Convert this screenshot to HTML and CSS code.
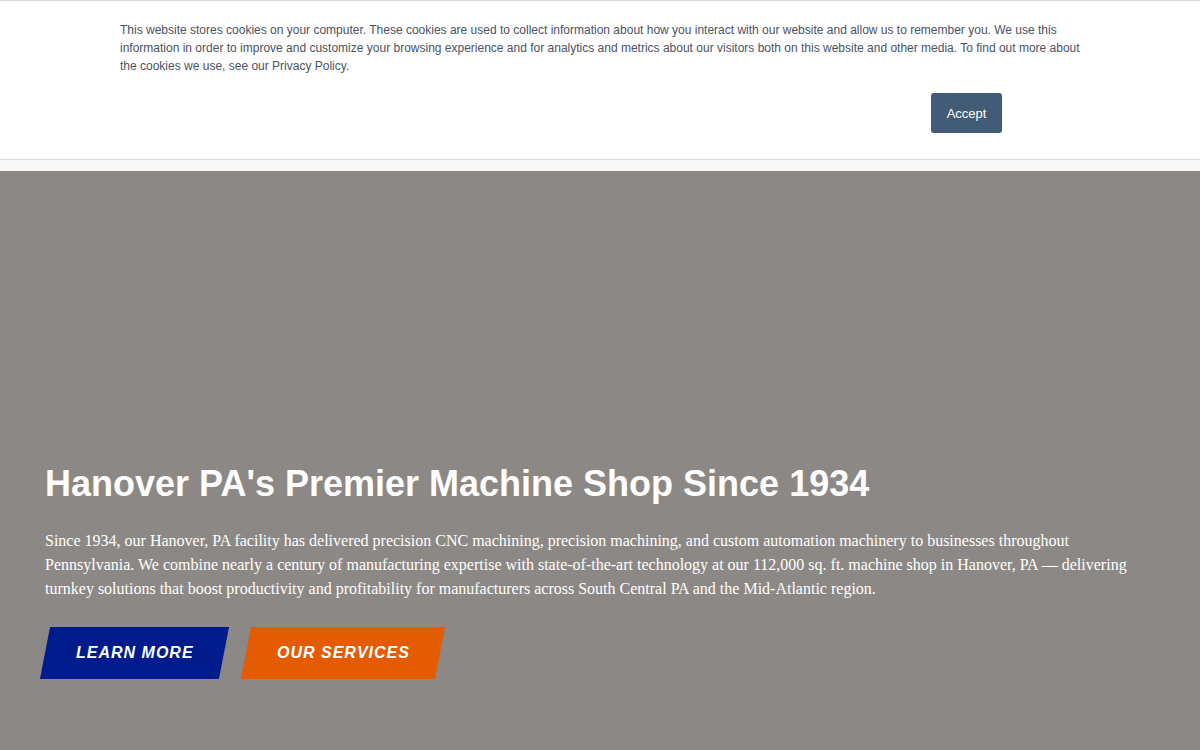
FILE: index.html
```html
<!DOCTYPE html>
<html lang="en">
<head>
<meta charset="utf-8">
<title>Hanover PA's Premier Machine Shop</title>
<link rel="stylesheet" href="styles.css">
</head>
<body>
<div class="cookie-banner">
  <div class="cookie-inner">
    <p class="cookie-text">This website stores cookies on your computer. These cookies are used to collect information about how you interact with our website and allow us to remember you. We use this information in order to improve and customize your browsing experience and for analytics and metrics about our visitors both on this website and other media. To find out more about the cookies we use, see our Privacy Policy.</p>
    <div class="cookie-actions">
      <button class="accept-btn">Accept</button>
    </div>
  </div>
</div>
<div class="header-strip"></div>
<section class="hero">
  <div class="hero-content">
    <h1 class="hero-title">Hanover PA's Premier Machine Shop Since 1934</h1>
    <p class="hero-text">Since 1934, our Hanover, PA facility has delivered precision CNC machining, precision machining, and custom automation machinery to businesses throughout Pennsylvania. We combine nearly a century of manufacturing expertise with state-of-the-art technology at our 112,000 sq. ft. machine shop in Hanover, PA — delivering turnkey solutions that boost productivity and profitability for manufacturers across South Central PA and the Mid-Atlantic region.</p>
    <div class="hero-buttons">
      <a class="btn btn-blue" href="#"><span>LEARN MORE</span></a>
      <a class="btn btn-orange" href="#"><span>OUR SERVICES</span></a>
    </div>
  </div>
</section>
</body>
</html>
```

FILE: styles.css
```css
html, body {
  margin: 0;
  padding: 0;
}
body {
  font-family: "Liberation Sans", Arial, sans-serif;
  background: #8c8885;
  overflow: hidden;
}
.cookie-banner {
  background: #ffffff;
  border-top: 1px solid #d6d6d6;
  border-bottom: 1px solid #dcdcdc;
  box-sizing: border-box;
  height: 160px;
}
.cookie-inner {
  width: 960px;
  margin-left: 120px;
  padding-top: 20px;
}
.cookie-text {
  margin: 0;
  font-size: 12px;
  line-height: 18px;
  color: #4b5262;
}
.cookie-actions {
  display: flex;
  justify-content: flex-end;
  padding-right: 78px;
  margin-top: 18px;
}
.accept-btn {
  width: 71px;
  height: 40px;
  background: #425b76;
  color: #ffffff;
  border: none;
  border-radius: 3px;
  font-family: "Liberation Sans", Arial, sans-serif;
  font-size: 13px;
  padding: 0;
}
.header-strip {
  height: 11px;
  background: #f8f8f8;
}
.hero {
  background: #8c8885;
  height: 580px;
}
.hero-content {
  padding: 291px 45px 0 45px;
}
.hero-title {
  margin: 0;
  color: #ffffff;
  font-family: "Liberation Sans", Arial, sans-serif;
  font-weight: 700;
  font-size: 36px;
  line-height: 44px;
}
.hero-text {
  margin: 23px 0 0 0;
  max-width: 1100px;
  color: #ffffff;
  font-family: "Liberation Serif", "Times New Roman", serif;
  font-size: 16px;
  line-height: 24px;
}
.hero-buttons {
  display: flex;
  gap: 22px;
  margin-top: 26px;
}
.btn {
  display: flex;
  align-items: center;
  justify-content: center;
  height: 52px;
  transform: skewX(-11deg);
  text-decoration: none;
}
.btn span {
  transform: skewX(11deg);
  color: #ffffff;
  font-family: "Liberation Sans", Arial, sans-serif;
  font-weight: 700;
  font-style: italic;
  font-size: 16px;
  letter-spacing: 1px;
}
.btn-blue {
  width: 179px;
  background: #001b8c;
}
.btn-orange {
  width: 194px;
  background: #e55b02;
}
```
